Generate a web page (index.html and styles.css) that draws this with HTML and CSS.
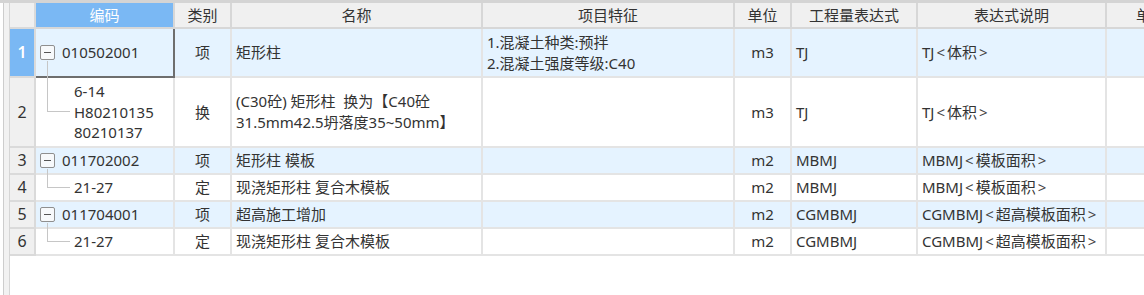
FILE: index.html
```html
<!DOCTYPE html>
<html lang="zh-CN">
<head>
<meta charset="utf-8">
<title>清单</title>
<link rel="stylesheet" href="styles.css">
</head>
<body>
<div class="frame">
  <div class="gutter"></div>
  <div class="grid">
    <div class="row head">
      <div class="cell rn"></div>
      <div class="cell hc sel">编码</div>
      <div class="cell hc">类别</div>
      <div class="cell hc">名称</div>
      <div class="cell hc">项目特征</div>
      <div class="cell hc">单位</div>
      <div class="cell hc">工程量表达式</div>
      <div class="cell hc">表达式说明</div>
      <div class="cell hc">单价</div>
    </div>

    <div class="row parent r1">
      <div class="cell rn cur">1</div>
      <div class="cell code tp focus"><span class="tog"></span>010502001</div>
      <div class="cell c">项</div>
      <div class="cell">矩形柱</div>
      <div class="cell ml">1.混凝土种类:预拌<br>2.混凝土强度等级:C40</div>
      <div class="cell c">m3</div>
      <div class="cell">TJ</div>
      <div class="cell">TJ<span class="ang">&lt;</span>体积<span class="ang">&gt;</span></div>
      <div class="cell"></div>
    </div>

    <div class="row r2">
      <div class="cell rn">2</div>
      <div class="cell code tc ml"><span class="branch"></span>6-14<br>H80210135<br>80210137</div>
      <div class="cell c">换</div>
      <div class="cell ml">(C30砼) 矩形柱&nbsp; 换为【C40砼<br>31.5mm42.5坍落度35~50mm】</div>
      <div class="cell"></div>
      <div class="cell c">m3</div>
      <div class="cell">TJ</div>
      <div class="cell">TJ<span class="ang">&lt;</span>体积<span class="ang">&gt;</span></div>
      <div class="cell"></div>
    </div>

    <div class="row parent">
      <div class="cell rn">3</div>
      <div class="cell code tp"><span class="tog"></span>011702002</div>
      <div class="cell c">项</div>
      <div class="cell">矩形柱 模板</div>
      <div class="cell"></div>
      <div class="cell c">m2</div>
      <div class="cell">MBMJ</div>
      <div class="cell">MBMJ<span class="ang">&lt;</span>模板面积<span class="ang">&gt;</span></div>
      <div class="cell"></div>
    </div>

    <div class="row">
      <div class="cell rn">4</div>
      <div class="cell code tc"><span class="branch"></span>21-27</div>
      <div class="cell c">定</div>
      <div class="cell">现浇矩形柱 复合木模板</div>
      <div class="cell"></div>
      <div class="cell c">m2</div>
      <div class="cell">MBMJ</div>
      <div class="cell">MBMJ<span class="ang">&lt;</span>模板面积<span class="ang">&gt;</span></div>
      <div class="cell"></div>
    </div>

    <div class="row parent">
      <div class="cell rn">5</div>
      <div class="cell code tp"><span class="tog"></span>011704001</div>
      <div class="cell c">项</div>
      <div class="cell">超高施工增加</div>
      <div class="cell"></div>
      <div class="cell c">m2</div>
      <div class="cell">CGMBMJ</div>
      <div class="cell">CGMBMJ<span class="ang">&lt;</span>超高模板面积<span class="ang">&gt;</span></div>
      <div class="cell"></div>
    </div>

    <div class="row">
      <div class="cell rn">6</div>
      <div class="cell code tc"><span class="branch"></span>21-27</div>
      <div class="cell c">定</div>
      <div class="cell">现浇矩形柱 复合木模板</div>
      <div class="cell"></div>
      <div class="cell c">m2</div>
      <div class="cell">CGMBMJ</div>
      <div class="cell">CGMBMJ<span class="ang">&lt;</span>超高模板面积<span class="ang">&gt;</span></div>
      <div class="cell"></div>
    </div>
  </div>
</div>
</body>
</html>
```

FILE: styles.css
```css
* { box-sizing: border-box; }
html, body { margin: 0; padding: 0; background: #ffffff; }
body {
  width: 1144px;
  height: 295px;
  overflow: hidden;
  font-family: "Noto Sans", "Noto Sans CJK SC", sans-serif;
  font-size: 15px;
  color: #333333;
}
.frame {
  display: flex;
  height: 295px;
  border-top: 3px solid #d4d4d4;
  overflow: hidden;
}
.gutter {
  flex: 0 0 7px;
  margin-left: 3px;
  background: #f2f2f2;
  border-left: 1px solid #cdcdcd;
  border-right: 1px solid #d6d6d6;
}
.grid {
  flex: 0 0 auto;
  display: flex;
  flex-direction: column;
}
.row {
  display: grid;
  grid-template-columns: 26px 139px 57px 251px 252px 57px 126px 189px 90px;
  height: 27px;
}
.row.head { height: 26px; }
.row.r1 { height: 49px; }
.row.r2 { height: 70px; }
.row.parent { background: #e5f3ff; }

.cell {
  position: relative;
  display: flex;
  align-items: center;
  padding: 0 4px;
  border-right: 2px solid #e4e4e4;
  border-bottom: 2px solid #e4e4e4;
  white-space: nowrap;
  overflow: hidden;
  line-height: 21px;
}
.cell.c { justify-content: center; }
.cell.ml { white-space: nowrap; }

.ang {
  margin: 0 2px;
  color: #444444;
}

.head .cell {
  background: #f0f0f0;
  border-color: #d7d7d7;
  justify-content: center;
}
.head .cell.sel {
  background: #7ab8f4;
  color: #ffffff;
}

.cell.rn {
  background: #f0f0f0;
  border-color: #dadada;
  justify-content: center;
  padding: 0;
  font-size: 16px;
}
.cell.rn.cur {
  background: #7ab8f4;
  color: #ffffff;
  font-weight: 600;
}

.cell.focus {
  border-right-color: #6e6e6e;
  border-bottom-color: #6e6e6e;
}

.cell.code { overflow: visible; }
.cell.tp { padding-left: 4px; }
.cell.tc { padding-left: 38px; line-height: 20.5px; }

.tog {
  position: relative;
  flex: 0 0 15px;
  width: 15px;
  height: 15px;
  margin-right: 7px;
  border: 1px solid #8f8f8f;
  border-radius: 2px;
  background: #f7f9fb;
}
.tog::before {
  content: "";
  position: absolute;
  left: 3px;
  top: 6px;
  width: 7px;
  height: 1px;
  background: #555555;
}
.cell.tp::after {
  content: "";
  position: absolute;
  left: 11px;
  top: calc(50% + 8px);
  bottom: -2px;
  border-left: 1px solid #c6c6c6;
}
.branch {
  position: absolute;
  left: 11px;
  top: -2px;
  bottom: 50%;
  width: 23px;
  border-left: 1px solid #c6c6c6;
  border-bottom: 1px solid #c6c6c6;
}
```
